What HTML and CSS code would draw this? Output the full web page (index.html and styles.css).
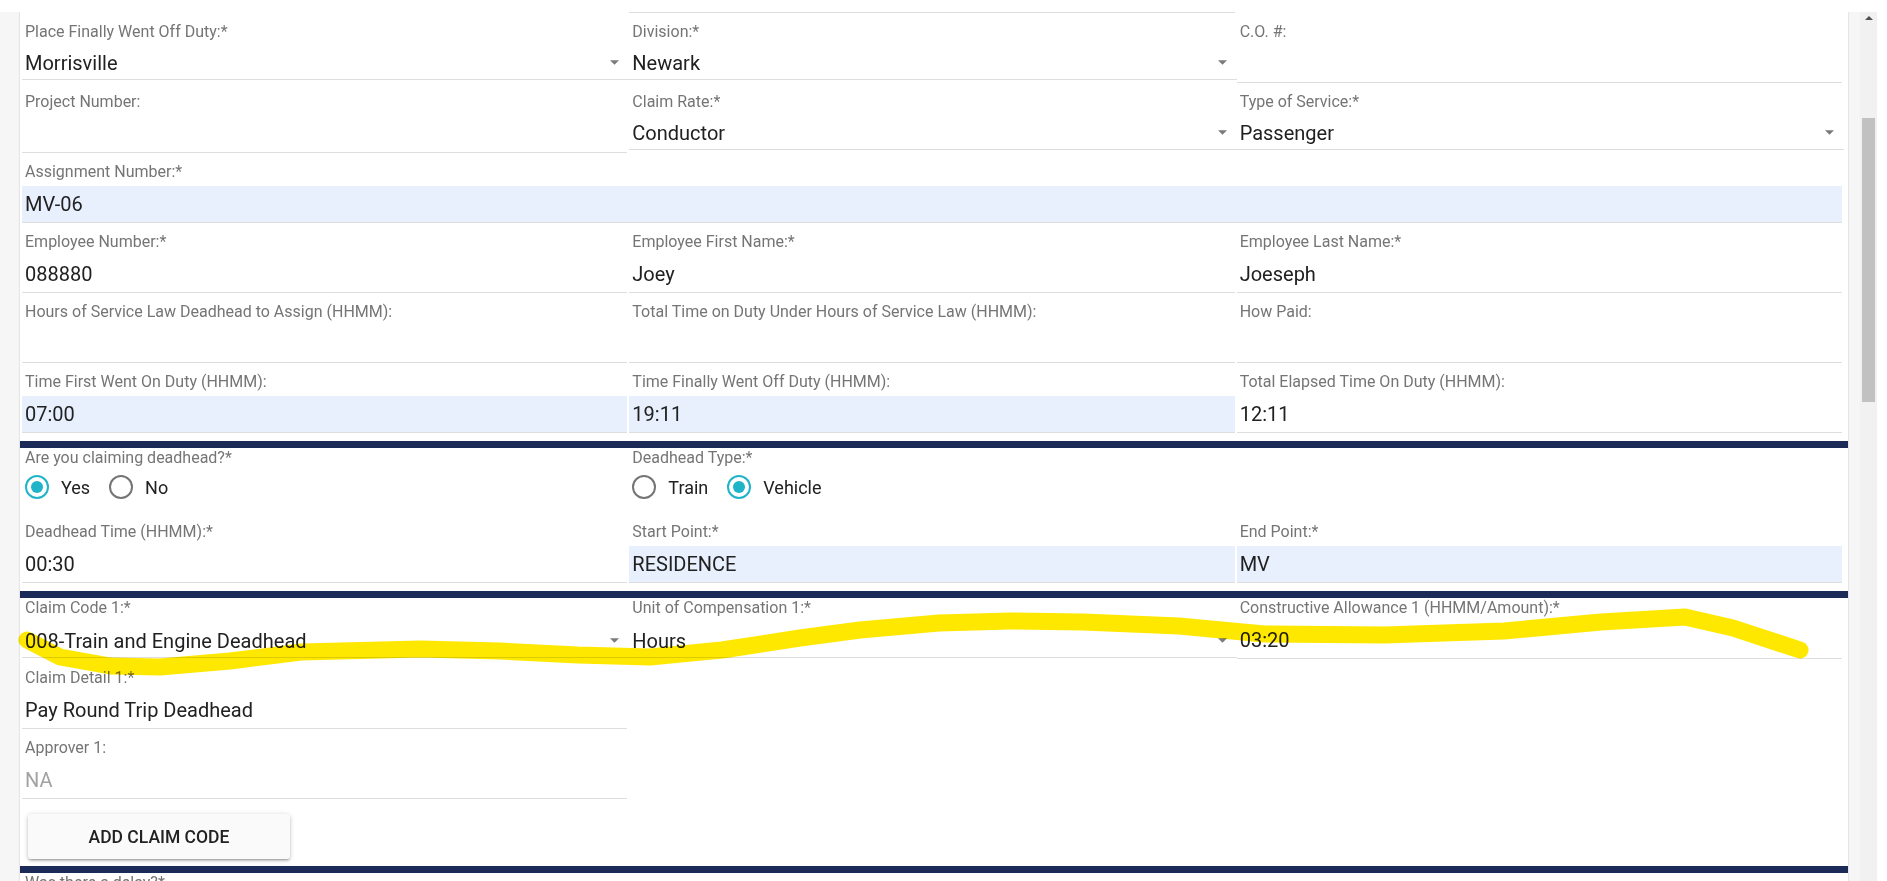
FILE: index.html
```html
<!DOCTYPE html>
<html lang="en">
<head>
    <meta charset="UTF-8">
    <meta name="viewport" content="width=device-width, initial-scale=1.0">
    <title>Time Claim</title>
    <link rel="stylesheet" href="styles.css">
</head>
<body>
    <div class="topbar"></div>
    <div class="viewport">
        <div class="page">
            <div class="card">
                <div class="row cut">
                    <div></div>
                    <div class="cut-line"></div>
                    <div></div>
                </div>

                <div class="row">
                    <div class="field select">
                        <label>Place Finally Went Off Duty:*</label>
                        <div class="box">Morrisville<svg class="arrow" viewBox="0 0 10 5"><path d="M0 0l5 5 5-5z"/></svg></div>
                    </div>
                    <div class="field select">
                        <label>Division:*</label>
                        <div class="box">Newark<svg class="arrow" viewBox="0 0 10 5"><path d="M0 0l5 5 5-5z"/></svg></div>
                    </div>
                    <div class="field">
                        <label>C.O. #:</label>
                        <div class="box"></div>
                    </div>
                </div>

                <div class="row">
                    <div class="field">
                        <label>Project Number:</label>
                        <div class="box"></div>
                    </div>
                    <div class="field select">
                        <label>Claim Rate:*</label>
                        <div class="box">Conductor<svg class="arrow" viewBox="0 0 10 5"><path d="M0 0l5 5 5-5z"/></svg></div>
                    </div>
                    <div class="field select">
                        <label>Type of Service:*</label>
                        <div class="box">Passenger<svg class="arrow" viewBox="0 0 10 5"><path d="M0 0l5 5 5-5z"/></svg></div>
                    </div>
                </div>

                <div class="row">
                    <div class="field full fill">
                        <label>Assignment Number:*</label>
                        <div class="box">MV-06</div>
                    </div>
                </div>

                <div class="row">
                    <div class="field">
                        <label>Employee Number:*</label>
                        <div class="box">088880</div>
                    </div>
                    <div class="field">
                        <label>Employee First Name:*</label>
                        <div class="box">Joey</div>
                    </div>
                    <div class="field">
                        <label>Employee Last Name:*</label>
                        <div class="box">Joeseph</div>
                    </div>
                </div>

                <div class="row">
                    <div class="field">
                        <label>Hours of Service Law Deadhead to Assign (HHMM):</label>
                        <div class="box"></div>
                    </div>
                    <div class="field">
                        <label>Total Time on Duty Under Hours of Service Law (HHMM):</label>
                        <div class="box"></div>
                    </div>
                    <div class="field">
                        <label>How Paid:</label>
                        <div class="box"></div>
                    </div>
                </div>

                <div class="row">
                    <div class="field fill">
                        <label>Time First Went On Duty (HHMM):</label>
                        <div class="box">07:00</div>
                    </div>
                    <div class="field fill">
                        <label>Time Finally Went Off Duty (HHMM):</label>
                        <div class="box">19:11</div>
                    </div>
                    <div class="field">
                        <label>Total Elapsed Time On Duty (HHMM):</label>
                        <div class="box">12:11</div>
                    </div>
                </div>

                <div class="divider"></div>

                <div class="row tight">
                    <div class="field radios">
                        <label>Are you claiming deadhead?*</label>
                        <div class="radio-group">
                            <span class="option"><span class="radio on"></span>Yes</span>
                            <span class="option"><span class="radio"></span>No</span>
                        </div>
                    </div>
                    <div class="field radios">
                        <label>Deadhead Type:*</label>
                        <div class="radio-group">
                            <span class="option"><span class="radio"></span>Train</span>
                            <span class="option"><span class="radio on"></span>Vehicle</span>
                        </div>
                    </div>
                    <div></div>
                </div>

                <div class="row">
                    <div class="field">
                        <label>Deadhead Time (HHMM):*</label>
                        <div class="box">00:30</div>
                    </div>
                    <div class="field fill">
                        <label>Start Point:*</label>
                        <div class="box">RESIDENCE</div>
                    </div>
                    <div class="field fill">
                        <label>End Point:*</label>
                        <div class="box">MV</div>
                    </div>
                </div>

                <div class="divider"></div>

                <div class="row tight short">
                    <div class="field select">
                        <label>Claim Code 1:*</label>
                        <div class="box">008-Train and Engine Deadhead<svg class="arrow" viewBox="0 0 10 5"><path d="M0 0l5 5 5-5z"/></svg></div>
                    </div>
                    <div class="field select">
                        <label>Unit of Compensation 1:*</label>
                        <div class="box">Hours<svg class="arrow" viewBox="0 0 10 5"><path d="M0 0l5 5 5-5z"/></svg></div>
                    </div>
                    <div class="field">
                        <label>Constructive Allowance 1 (HHMM/Amount):*</label>
                        <div class="box">03:20</div>
                    </div>
                </div>

                <div class="row">
                    <div class="field">
                        <label>Claim Detail 1:*</label>
                        <div class="box">Pay Round Trip Deadhead</div>
                    </div>
                </div>

                <div class="row">
                    <div class="field disabled">
                        <label>Approver 1:</label>
                        <div class="box">NA</div>
                    </div>
                </div>

                <div class="actions">
                    <button class="btn">ADD CLAIM CODE</button>
                </div>

                <div class="divider small-gap"></div>

                <div class="row tight">
                    <div class="field">
                        <label>Was there a delay?*</label>
                    </div>
                </div>
            </div>
        </div>
        <div class="scrollbar">
            <div class="sb-up"></div>
            <div class="sb-thumb"></div>
        </div>
        <div class="edge"></div>
    </div>

    <!-- yellow marker stroke drawn over the screenshot -->
    <svg class="marker" width="1887" height="881" viewBox="0 0 1887 881">
        <polyline points="27,640 60,657 110,666 160,667 230,661 301,652 420,649 500,651 578,655 650,657 722,650 800,638 860,630 939,623 1010,621 1083,622 1179,626 1264,634 1384,635 1504,631 1601,622 1685,617 1733,628 1800,650"/>
    </svg>
</body>
</html>
```

FILE: styles.css
```css
* {
    box-sizing: border-box;
}
html, body {
    margin: 0;
    height: 100%;
    overflow: hidden;
}
body {
    font-family: Roboto, "Noto Sans", "Liberation Sans", sans-serif;
    background: #ffffff;
    color: #212121;
    position: relative;
}
.topbar {
    height: 12px;
    background: #ffffff;
}
.viewport {
    display: flex;
    height: 869px;
    background: #f6f6f6;
}
.page {
    flex: 1;
    padding: 0 12px 0 20px;
    overflow: hidden;
}
.card {
    background: #ffffff;
    box-shadow: 0 0 2px rgba(0, 0, 0, 0.2);
    min-height: 100%;
}
.row {
    display: grid;
    grid-template-columns: repeat(3, 1fr);
    column-gap: 2px;
    align-items: start;
    padding: 0 6px 0 2px;
}
.row.cut {
    height: 1px;
}
.cut-line {
    height: 1px;
    background: #dedede;
}
.field {
    display: flex;
    flex-direction: column;
    height: 70px;
    min-width: 0;
}
.field label {
    font-size: 16px;
    line-height: 19px;
    color: #757575;
    margin-top: 9px;
    padding-left: 3px;
    white-space: nowrap;
}
.row.tight .field label {
    margin-top: 0;
}
.box {
    margin-top: auto;
    height: 37px;
    border-bottom: 1px solid #dedede;
    font-size: 20px;
    line-height: 36px;
    padding-left: 3px;
    display: flex;
    align-items: center;
    white-space: nowrap;
}
.field.select {
    height: 67px;
    margin-right: -2px;
}
.field.select .box {
    height: 34px;
    justify-content: space-between;
    padding-right: 10px;
}
.row.short .field {
    height: 61px;
}
.row.short .field.select {
    height: 60px;
}
.arrow {
    width: 9px;
    height: 5px;
    fill: #7a7a7a;
    flex-shrink: 0;
}
.fill .box {
    background: #e8f0fe;
}
.full {
    grid-column: 1 / -1;
}
.disabled .box {
    color: #a2a2a2;
}
.divider {
    height: 7px;
    margin-top: 8px;
    background: #1c2a58;
}
.divider.small-gap {
    margin-top: 7px;
}
.field.radios {
    height: 65px;
}
.radio-group {
    display: flex;
    align-items: center;
    height: 24px;
    margin-top: 8px;
    padding-left: 3px;
}
.option {
    display: flex;
    align-items: center;
    margin-right: 19px;
    font-size: 18px;
    color: #212121;
}
.radio {
    width: 24px;
    height: 24px;
    border: 2px solid #757575;
    border-radius: 50%;
    margin-right: 12px;
    display: flex;
    align-items: center;
    justify-content: center;
}
.radio.on {
    border-color: #1fb4c8;
}
.radio.on::after {
    content: "";
    width: 12px;
    height: 12px;
    border-radius: 50%;
    background: #1fb4c8;
}
.actions {
    padding: 15px 0 0 8px;
}
.btn {
    width: 262px;
    height: 45px;
    border: none;
    border-radius: 3px;
    background: #fafafa;
    color: #212121;
    font-family: Roboto, "Noto Sans", sans-serif;
    font-size: 17.5px;
    font-weight: 500;
    box-shadow: 0 1px 5px rgba(0, 0, 0, 0.2), 0 2px 2px rgba(0, 0, 0, 0.14), 0 3px 1px -2px rgba(0, 0, 0, 0.12);
    cursor: pointer;
}
.scrollbar {
    width: 17px;
    background: #f1f1f1;
    display: flex;
    flex-direction: column;
    align-items: center;
}
.sb-up {
    width: 0;
    height: 0;
    margin-top: 4px;
    border-left: 4px solid transparent;
    border-right: 4px solid transparent;
    border-bottom: 4px solid #505050;
}
.sb-thumb {
    width: 13px;
    height: 284px;
    margin-top: 98px;
    background: #c1c1c1;
}
.edge {
    width: 10px;
    background: #ffffff;
}
.marker {
    position: absolute;
    top: 0;
    left: 0;
    pointer-events: none;
    mix-blend-mode: multiply;
}
.marker polyline {
    fill: none;
    stroke: #ffe800;
    stroke-width: 17;
    stroke-linecap: round;
    stroke-linejoin: round;
}
```
